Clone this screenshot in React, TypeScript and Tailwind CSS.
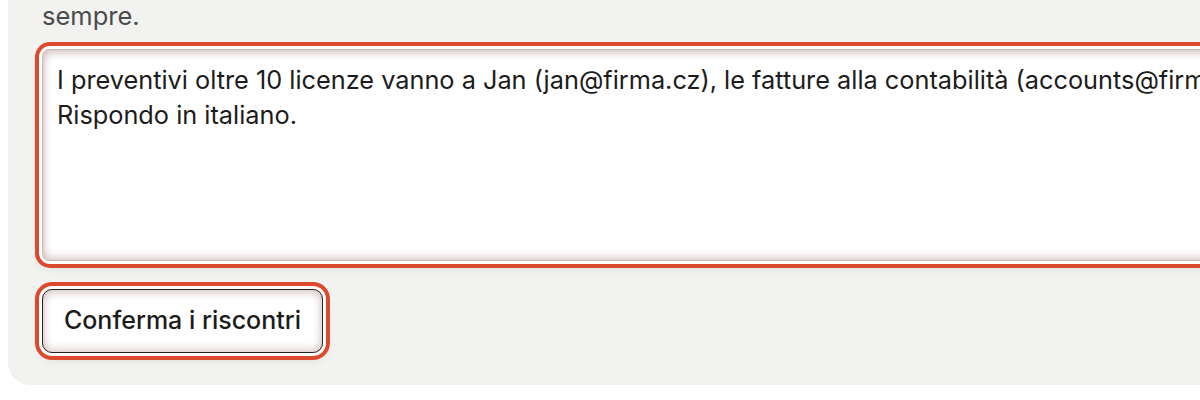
import React from 'react';

const NOTE =
  'I preventivi oltre 10 licenze vanno a Jan (jan@firma.cz), le fatture alla contabilità (accounts@firma.cz).\nRispondo in italiano.';

export default function App() {
  return (
    <div className="w-[1200px] h-[400px] overflow-hidden bg-white font-['Inter',sans-serif]">
      <div className="ml-2 w-[1700px] h-[385px] rounded-bl-[22px] bg-[#f2f2f0] pl-[34px] pt-[1px]">
        {/* Intro tail */}
        <p className="text-[25.5px] leading-[30px] text-[#4b4b4b]">sempre.</p>

        {/* Focused textarea */}
        <div className="mt-[18px] w-[1600px] rounded-[8px] ring-[4px] ring-[#dc4a2d] ring-offset-[3px] ring-offset-white shadow-[0_4px_12px_rgba(0,0,0,0.18)]">
          <textarea
            readOnly
            defaultValue={NOTE}
            className="block w-full h-[212px] resize-none rounded-[8px] border border-[#c9b9b6] bg-white px-[14px] py-[12px] text-[25.3px] leading-[35px] text-[#1c1c1c] outline-none shadow-[inset_0_3px_8px_rgba(120,70,60,0.28),inset_0_-3px_8px_rgba(120,70,60,0.22)]"
          />
        </div>

        {/* Confirm button */}
        <div className="mt-[28px] inline-block rounded-[10px] ring-[4px] ring-[#dc4a2d] ring-offset-[3px] ring-offset-white shadow-[0_4px_12px_rgba(0,0,0,0.18)]">
          <button className="block h-[64px] w-[281px] rounded-[10px] border border-[#2a2220] bg-white text-[25px] font-medium text-[#1c1c1c] shadow-[inset_0_3px_8px_rgba(120,70,60,0.25),inset_0_-3px_8px_rgba(120,70,60,0.2)]">
            Conferma i riscontri
          </button>
        </div>
      </div>
    </div>
  );
}
